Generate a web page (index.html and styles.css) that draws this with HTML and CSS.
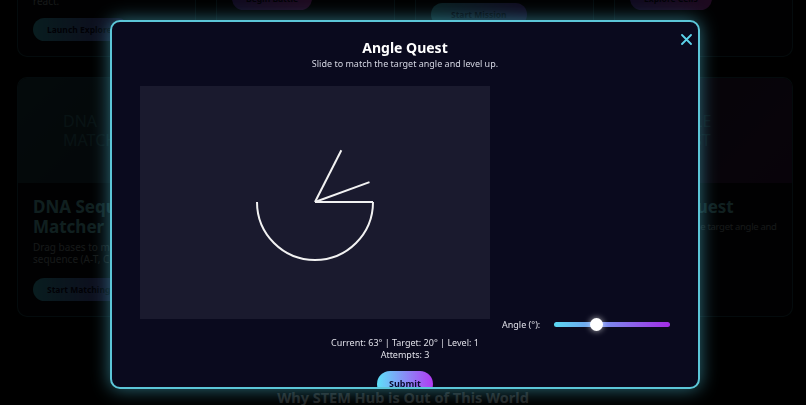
FILE: index.html
```html
<!DOCTYPE html>
<html lang="en">
<head>
    <meta charset="UTF-8">
    <meta name="viewport" content="width=device-width, initial-scale=1.0">
    <title>STEM Hub - Angle Quest</title>
    <link rel="stylesheet" href="styles.css">
</head>
<body>
    <main class="page">
        <section class="games">
            <div class="card card-top pad-a">
                <p class="card-desc">react.</p>
                <button class="card-btn btn-teal">Launch Explorer</button>
            </div>
            <div class="card card-top pad-d">
                <button class="card-btn btn-purple">Begin Battle</button>
            </div>
            <div class="card card-top pad-b">
                <button class="card-btn btn-teal wide">Start Mission</button>
            </div>
            <div class="card card-top pad-d">
                <button class="card-btn btn-purple">Explore Cells</button>
            </div>

            <div class="card">
                <div class="card-img img-teal"><span>DNA<br>MATCH</span></div>
                <div class="card-body">
                    <h3>DNA Sequence Matcher</h3>
                    <p class="card-desc">Drag bases to match the sequence (A-T, C-G).</p>
                    <button class="card-btn btn-teal">Start Matching</button>
                </div>
            </div>
            <div class="card">
                <div class="card-img img-teal"><span>GRAVITY</span></div>
                <div class="card-body">
                    <h3>Gravity Drop</h3>
                    <p class="card-desc">Drop planets into orbit.</p>
                    <button class="card-btn btn-teal">Play Now</button>
                </div>
            </div>
            <div class="card">
                <div class="card-img img-purple"><span>CODE</span></div>
                <div class="card-body">
                    <h3>Code Breaker</h3>
                    <p class="card-desc">Crack the binary code.</p>
                    <button class="card-btn btn-purple">Decode</button>
                </div>
            </div>
            <div class="card">
                <div class="card-img img-purple"><span>ANGLE<br>QUEST</span></div>
                <div class="card-body">
                    <h3>Angle Quest</h3>
                    <p class="card-desc tight">Slide to match the target angle and level up.</p>
                </div>
            </div>
        </section>
        <h2 class="section-title">Why STEM Hub is Out of This World</h2>
    </main>

    <div class="overlay">
        <div class="modal">
            <button class="close-btn" aria-label="Close">
                <svg width="11" height="11" viewBox="0 0 11 11">
                    <path d="M1 1 L10 10 M10 1 L1 10" stroke="#5cd3ea" stroke-width="1.8" stroke-linecap="round"/>
                </svg>
            </button>
            <h2 class="modal-title">Angle Quest</h2>
            <p class="modal-sub">Slide to match the target angle and level up.</p>
            <div class="game-row">
                <canvas id="angleCanvas" width="350" height="233"></canvas>
                <label for="angleInput">Angle (°):</label>
                <input type="range" id="angleInput" min="0" max="180" value="63">
            </div>
            <p class="stats">Current: 63° | Target: 20° | Level: 1<br>Attempts: 3</p>
            <button class="submit-btn">Submit</button>
        </div>
    </div>

    <script>
        const canvas = document.getElementById('angleCanvas');
        const ctx = canvas.getContext('2d');
        const cx = 175, cy = 116, len = 58;

        function ray(deg) {
            const rad = deg * Math.PI / 180;
            ctx.beginPath();
            ctx.moveTo(cx, cy);
            ctx.lineTo(cx + len * Math.cos(rad), cy - len * Math.sin(rad));
            ctx.stroke();
        }

        ctx.fillStyle = '#1a1a2e';
        ctx.fillRect(0, 0, canvas.width, canvas.height);
        ctx.strokeStyle = '#f2f2f2';
        ctx.lineWidth = 2;

        ray(0);
        ray(63);
        ray(20);

        ctx.beginPath();
        ctx.arc(cx, cy, len, 0, Math.PI);
        ctx.stroke();
    </script>
</body>
</html>
```

FILE: styles.css
```css
body {
    margin: 0;
    background-color: #000;
    font-family: "Noto Sans", sans-serif;
    overflow: hidden;
    height: 405px;
}
.page {
    margin-top: -143px;
}
.games {
    display: grid;
    grid-template-columns: repeat(4, 179px);
    gap: 20px;
    margin-left: 17px;
}
.card {
    background-color: #0a0a12;
    border: 1px solid rgba(80, 220, 230, 0.35);
    border-radius: 10px;
    overflow: hidden;
    display: flex;
    flex-direction: column;
}
.card-top {
    height: 200px;
    justify-content: flex-end;
    padding: 0 15px;
    box-sizing: border-box;
}
.pad-a { padding-bottom: 15px; }
.pad-b { padding-bottom: 30px; }
.pad-d { padding-bottom: 46px; }
.card-img {
    height: 105px;
    display: flex;
    align-items: center;
    padding-left: 45px;
    font-size: 16px;
    line-height: 19px;
    color: rgba(90, 200, 210, 0.5);
}
.img-teal {
    background: linear-gradient(135deg, #1f4a52, #20303f);
}
.img-purple {
    background: linear-gradient(135deg, #2c2540, #3d1a4a);
}
.card-body {
    padding: 14px 15px 15px;
}
.card h3 {
    margin: 0 0 4px;
    font-size: 17px;
    line-height: 20px;
    color: #6fd8dc;
}
.card-desc {
    margin: 0 0 11px;
    font-size: 10px;
    line-height: 12px;
    color: #9aa;
}
.card-desc.tight {
    font-size: 9.5px;
    letter-spacing: -0.3px;
}
.card-btn {
    align-self: flex-start;
    height: 23px;
    padding: 0 14px;
    border: none;
    border-radius: 12px;
    font-family: inherit;
    font-size: 8.5px;
    font-weight: bold;
    color: #0a0a2e;
}
.btn-teal {
    background: linear-gradient(90deg, #3ec9d8, #6b3fd0);
}
.btn-purple {
    background: linear-gradient(90deg, #6b3fd0, #d23fd8);
}
.wide {
    padding: 0 20px;
}
.section-title {
    margin: 70px 0 0;
    text-align: center;
    font-size: 14.5px;
    color: #eee;
}

.overlay {
    position: fixed;
    inset: 0;
    background-color: rgba(0, 0, 0, 0.86);
    display: flex;
    justify-content: center;
    align-items: flex-start;
    padding: 20px 0 0 4px;
}
.modal {
    position: relative;
    width: 590px;
    height: 369px;
    box-sizing: border-box;
    padding: 17px 28px;
    background-color: #0a0a1e;
    border: 2px solid #5cc6d8;
    border-radius: 10px;
    box-shadow: 0 0 18px rgba(80, 200, 225, 0.55);
    overflow: hidden;
    text-align: center;
    color: #e6e6ee;
}
.close-btn {
    position: absolute;
    top: 12px;
    right: 6px;
    padding: 0;
    border: none;
    background: none;
    line-height: 0;
}
.modal-title {
    margin: 0;
    font-size: 14px;
    line-height: 18px;
    color: #fff;
}
.modal-sub {
    margin: 0 0 16px;
    font-size: 9px;
    line-height: 13px;
    color: #d4d6e2;
}
.game-row {
    display: flex;
    justify-content: center;
    align-items: flex-end;
    gap: 12px;
}
.game-row canvas {
    display: block;
    margin-bottom: 12px;
}
.game-row label {
    width: 41px;
    white-space: nowrap;
    text-align: left;
    font-size: 9px;
    line-height: 13px;
    color: #e0e0e8;
}
.game-row input[type="range"] {
    -webkit-appearance: none;
    appearance: none;
    width: 116px;
    height: 5px;
    margin: 0 0 4px;
    border-radius: 3px;
    background: linear-gradient(90deg, #5ad8f2, #a32ce6);
}
.game-row input[type="range"]::-webkit-slider-thumb {
    -webkit-appearance: none;
    width: 13px;
    height: 13px;
    border-radius: 50%;
    background: #fff;
    box-shadow: 0 0 6px rgba(255, 255, 255, 0.7);
}
.stats {
    margin: 6px 0 9px;
    font-size: 9px;
    line-height: 12px;
    color: #e0e0e8;
}
.submit-btn {
    width: 56px;
    height: 26px;
    border: none;
    border-radius: 13px;
    background: linear-gradient(90deg, #5ee0f8, #b23af2);
    font-family: inherit;
    font-size: 9px;
    font-weight: bold;
    color: #0a0a2e;
}
```
